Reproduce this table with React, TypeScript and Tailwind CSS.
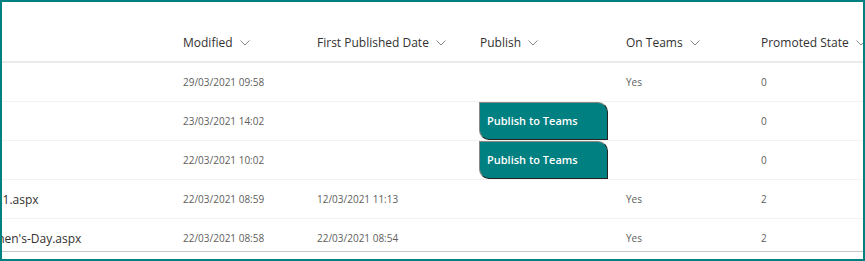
import React from "react";

type Row = {
  name: string;
  nameOffset: string;
  modified: string;
  firstPublished: string;
  publish: boolean;
  onTeams: string;
  promoted: string;
};

// list is scrolled sideways, so the name column is only partly in view
const rows: Row[] = [
  { name: "", nameOffset: "ml-0", modified: "29/03/2021 09:58", firstPublished: "", publish: false, onTeams: "Yes", promoted: "0" },
  { name: "", nameOffset: "ml-0", modified: "23/03/2021 14:02", firstPublished: "", publish: true, onTeams: "", promoted: "0" },
  { name: "", nameOffset: "ml-0", modified: "22/03/2021 10:02", firstPublished: "", publish: true, onTeams: "", promoted: "0" },
  { name: "Newsletter-March-2021.aspx", nameOffset: "-ml-[124px]", modified: "22/03/2021 08:59", firstPublished: "12/03/2021 11:13", publish: false, onTeams: "Yes", promoted: "2" },
  { name: "International-Women's-Day.aspx", nameOffset: "-ml-[103px]", modified: "22/03/2021 08:58", firstPublished: "22/03/2021 08:54", publish: false, onTeams: "Yes", promoted: "2" },
];

const cols = "grid grid-cols-[181px_134px_162px_147px_135px_1fr]";

function Chevron() {
  return (
    <svg width="10" height="6" viewBox="0 0 10 6" className="ml-[7px] shrink-0">
      <path d="M0.5 0.5 L5 5 L9.5 0.5" fill="none" stroke="#8a8886" strokeWidth="1" />
    </svg>
  );
}

function HeaderCell({ label, className = "" }: { label: string; className?: string }) {
  return (
    <div className={`flex items-center whitespace-nowrap overflow-hidden ${className}`}>
      <span>{label}</span>
      <Chevron />
    </div>
  );
}

function PublishButton() {
  return (
    <button className="w-[129px] h-[38px] bg-[#008080] text-white text-[11px] font-semibold text-left pl-[7px] border border-t-[#8a8886] border-l-[#8a8886] border-r-[#252423] border-b-[#252423] rounded-tr-[10px] rounded-bl-[10px]">
      Publish to Teams
    </button>
  );
}

export default function App() {
  return (
    <div
      className="w-[865px] h-[261px] border-2 border-[#038080] bg-white overflow-hidden"
      style={{ fontFamily: '"Open Sans", "Noto Sans", sans-serif' }}
    >
      <div className="h-[250px] border-b border-[#c8c6c4] overflow-hidden">
        {/* Column headers */}
        <div className={`${cols} h-[61px] items-end pb-[9px] border-b-2 border-[#edebe9] text-[12px] text-[#323130]`}>
          <div />
          <HeaderCell label="Modified" />
          <HeaderCell label="First Published Date" />
          <HeaderCell label="Publish" className="pl-px" />
          <HeaderCell label="On Teams" />
          <HeaderCell label="Promoted State" />
        </div>

        {/* Rows */}
        {rows.map((r, i) => (
          <div key={i} className={`${cols} h-[39px] items-center border-b border-[#f3f2f1] text-[10px] text-[#605e5c]`}>
            <div className="overflow-hidden whitespace-nowrap text-[12px] text-[#323130] pt-[2px]">
              <span className={`inline-block ${r.nameOffset}`}>{r.name}</span>
            </div>
            <div>{r.modified}</div>
            <div>{r.firstPublished}</div>
            <div className="h-full flex items-center">{r.publish && <PublishButton />}</div>
            <div>{r.onTeams}</div>
            <div>{r.promoted}</div>
          </div>
        ))}
      </div>
    </div>
  );
}
